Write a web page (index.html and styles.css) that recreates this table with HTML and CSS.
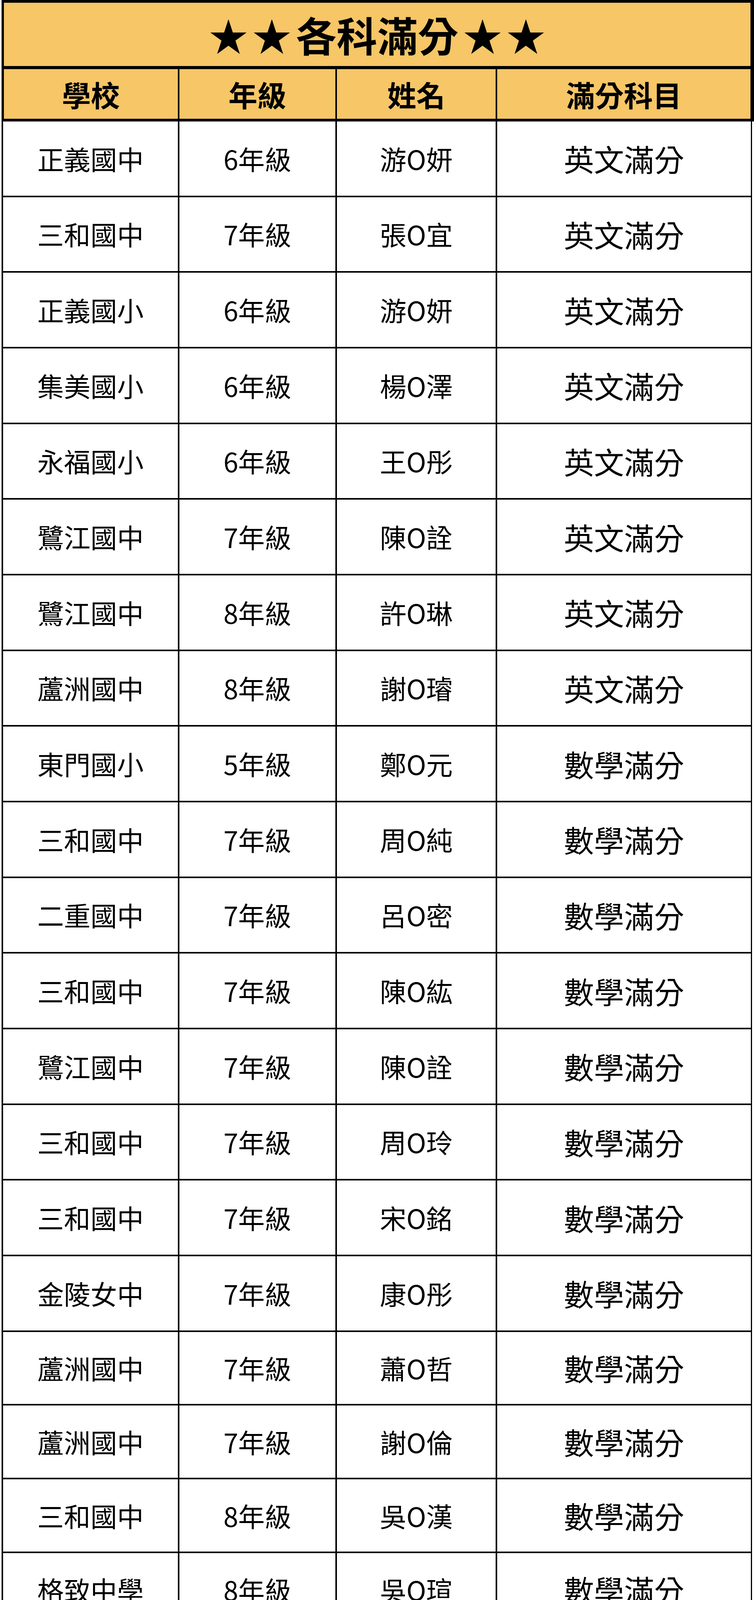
FILE: index.html
```html
<!DOCTYPE html>
<html lang="zh-Hant">
<head>
<meta charset="utf-8">
<title>各科滿分</title>
<link rel="stylesheet" href="styles.css">
</head>
<body>
<div class="board">
  <div class="title">
    <span class="star">★</span><span class="star">★</span><span class="title-text">各科滿分</span><span class="star">★</span><span class="star">★</span>
  </div>
  <div class="head">
    <div>學校</div><div>年級</div><div>姓名</div><div>滿分科目</div>
  </div>
  <div class="row"><div>正義國中</div><div>6年級</div><div>游O妍</div><div class="subj">英文滿分</div></div>
  <div class="row"><div>三和國中</div><div>7年級</div><div>張O宜</div><div class="subj">英文滿分</div></div>
  <div class="row"><div>正義國小</div><div>6年級</div><div>游O妍</div><div class="subj">英文滿分</div></div>
  <div class="row"><div>集美國小</div><div>6年級</div><div>楊O澤</div><div class="subj">英文滿分</div></div>
  <div class="row"><div>永福國小</div><div>6年級</div><div>王O彤</div><div class="subj">英文滿分</div></div>
  <div class="row"><div>鷺江國中</div><div>7年級</div><div>陳O詮</div><div class="subj">英文滿分</div></div>
  <div class="row"><div>鷺江國中</div><div>8年級</div><div>許O琳</div><div class="subj">英文滿分</div></div>
  <div class="row"><div>蘆洲國中</div><div>8年級</div><div>謝O璿</div><div class="subj">英文滿分</div></div>
  <div class="row"><div>東門國小</div><div>5年級</div><div>鄭O元</div><div class="subj">數學滿分</div></div>
  <div class="row"><div>三和國中</div><div>7年級</div><div>周O純</div><div class="subj">數學滿分</div></div>
  <div class="row"><div>二重國中</div><div>7年級</div><div>呂O密</div><div class="subj">數學滿分</div></div>
  <div class="row"><div>三和國中</div><div>7年級</div><div>陳O紘</div><div class="subj">數學滿分</div></div>
  <div class="row"><div>鷺江國中</div><div>7年級</div><div>陳O詮</div><div class="subj">數學滿分</div></div>
  <div class="row"><div>三和國中</div><div>7年級</div><div>周O玲</div><div class="subj">數學滿分</div></div>
  <div class="row"><div>三和國中</div><div>7年級</div><div>宋O銘</div><div class="subj">數學滿分</div></div>
  <div class="row"><div>金陵女中</div><div>7年級</div><div>康O彤</div><div class="subj">數學滿分</div></div>
  <div class="row short"><div>蘆洲國中</div><div>7年級</div><div>蕭O哲</div><div class="subj">數學滿分</div></div>
  <div class="row short"><div>蘆洲國中</div><div>7年級</div><div>謝O倫</div><div class="subj">數學滿分</div></div>
  <div class="row short"><div>三和國中</div><div>8年級</div><div>吳O漢</div><div class="subj">數學滿分</div></div>
  <div class="row short"><div>格致中學</div><div>8年級</div><div>吳O瑄</div><div class="subj">數學滿分</div></div>
  <div class="row short"><div>蘆洲國中</div><div>8年級</div><div>謝O璿</div><div class="subj">數學滿分</div></div>
  <div class="row short"><div>蘆洲國中</div><div>8年級</div><div>簡O修</div><div class="subj">數學滿分</div></div>
  <div class="row short"><div>蘆洲國中</div><div>8年級</div><div>陳O子</div><div class="subj">數學滿分</div></div>
  <div class="row short"><div>三民國中</div><div>8年級</div><div>梁O輔</div><div class="subj">數學滿分</div></div>
  <div class="row short"><div>三和國中</div><div>7年級</div><div>莊O臻</div><div class="subj">自然滿分</div></div>
  <div class="row short"><div>三和國中</div><div>7年級</div><div>周O玲</div><div class="subj">生物滿分</div></div>
  <div class="row short"><div>三和國中</div><div>7年級</div><div>廖O涵</div><div class="subj">生物滿分</div></div>
  <div class="row short"><div>三和國中</div><div>7年級</div><div>許O智</div><div class="subj">生物滿分</div></div>
  <div class="row short"><div>三和國中</div><div>8年級</div><div>周O佑</div><div class="subj">理化滿分</div></div>
  <div class="row short"><div>三和國中</div><div>8年級</div><div>李O旆</div><div class="subj">理化滿分</div></div>
  <div class="row short"><div>三和國中</div><div>8年級</div><div>林O汝</div><div class="subj">社會滿分</div></div>
  <div class="row short"><div>碧華國中</div><div>8年級</div><div>王O棠</div><div class="subj">社會滿分</div></div>
  <div class="row short"><div>弘道國中</div><div>7年級</div><div>林O儀</div><div class="subj">地理滿分</div></div>
  <div class="row short"><div>格致中學</div><div>7年級</div><div>楊O鈺</div><div class="subj">歷史滿分</div></div>
  <div class="row last"><div>格致中學</div><div>7年級</div><div>陳O閔</div><div class="subj">歷史滿分</div></div>
</div>
</body>
</html>
```

FILE: styles.css
```css
html, body {
  margin: 0;
  padding: 0;
  background: #ffffff;
}

body {
  font-family: "Noto Sans CJK TC", "Noto Sans", "Liberation Sans", sans-serif;
  color: #000000;
}

.board {
  margin-left: 4px;
  width: 1925px;
}

.title {
  box-sizing: border-box;
  height: 169px;
  border-style: solid;
  border-color: #000000;
  border-width: 7px 9px 0 6px;
  background: #f6c667;
  display: flex;
  align-items: center;
  justify-content: center;
  column-gap: 12px;
  font-weight: 700;
  line-height: 1;
}

.title-text {
  font-size: 104px;
}

.star {
  font-size: 99px;
}

.head {
  box-sizing: border-box;
  height: 142px;
  border-style: solid;
  border-color: #000000;
  border-width: 8px 9px 7px 6px;
  background: #000000;
  display: grid;
  grid-template-columns: 445px 399px 406px 648px;
  column-gap: 4px;
}

.head > div {
  background: #f6c667;
  display: flex;
  align-items: center;
  justify-content: center;
  font-size: 74px;
  font-weight: 700;
  line-height: 1;
}

.row {
  box-sizing: border-box;
  width: 1920px;
  height: 193.67px;
  border-style: solid;
  border-color: #000000;
  border-width: 0 3px 4px 4px;
  background: #000000;
  display: grid;
  grid-template-columns: 447px 399px 406px 649px;
  column-gap: 4px;
}

.row.short {
  height: 188.94px;
}

.row.last {
  height: 200.3px;
  border-bottom-width: 5px;
}

.row > div {
  background: #ffffff;
  display: flex;
  align-items: center;
  justify-content: center;
  font-size: 68px;
  font-weight: 400;
  line-height: 1;
}

.row > .subj {
  font-size: 77px;
}
```
